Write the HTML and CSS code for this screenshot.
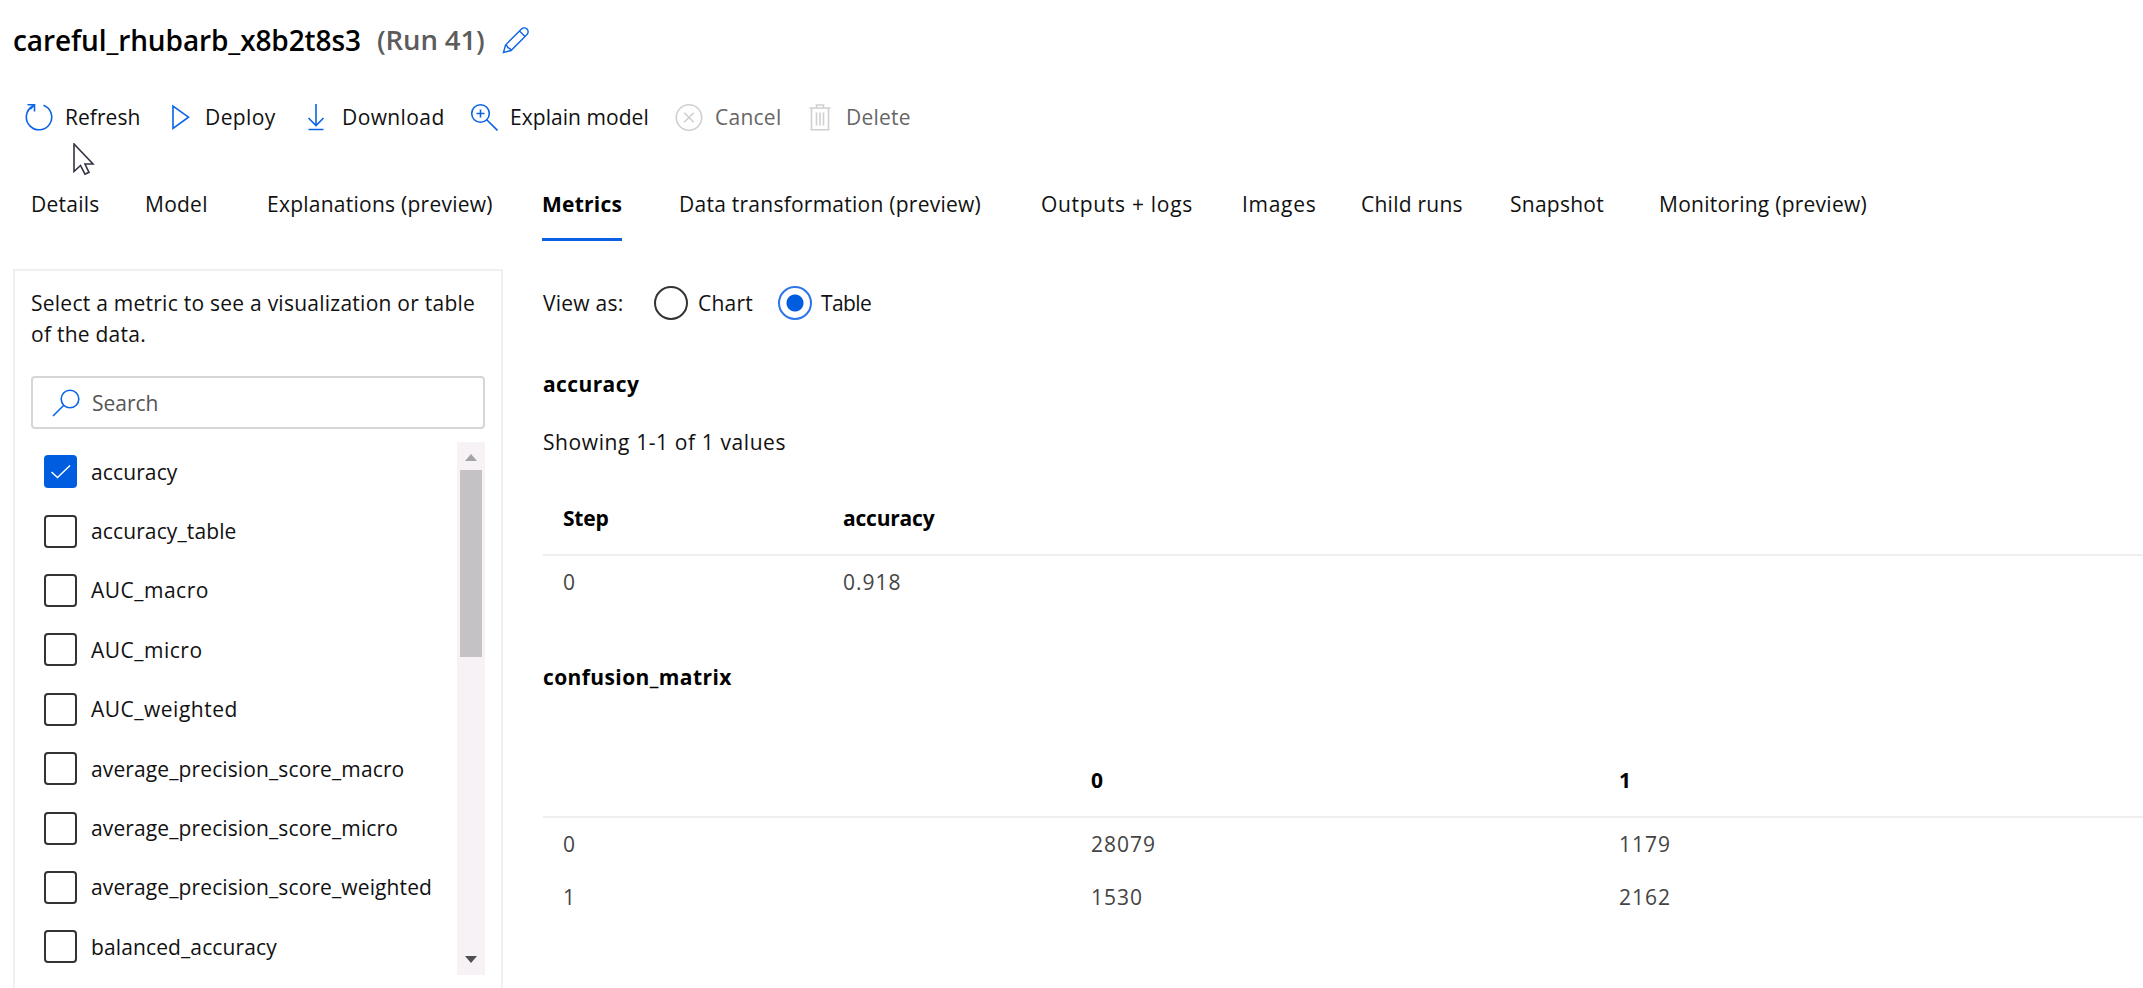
FILE: index.html
```html
<!DOCTYPE html>
<html lang="en">
<head>
<meta charset="utf-8">
<title>careful_rhubarb_x8b2t8s3</title>
<link rel="stylesheet" href="styles.css">
</head>
<body>
<header class="title">
  <h1 class="run-name">careful_rhubarb_x8b2t8s3</h1>
  <span class="run-id">(Run 41)</span>
  <svg class="icon pencil" width="28" height="28" viewBox="0 0 28 28"><path d="M1.500 26.500 3.500 19 19.500 3a3.800 3.800 0 0 1 5.500 5.500L9 24.500ZM17.500 5l5.500 5.500M3.500 19a3.500 3.500 0 0 1 2.500 2.800A3.500 3.500 0 0 1 9 24.500"/></svg>
</header>
<nav class="toolbar">
  <button class="command"><svg class="icon" width="28" height="28" viewBox="0 0 28 28"><path d="M18.500 2.200A12.700 12.700 0 1 1 7.500 3.200M2.500 1.700H9.500V8.500M9.500 1.700 5.500 6"/></svg><span>Refresh</span></button>
  <button class="command"><svg class="icon" width="20" height="28" viewBox="0 0 20 28"><path d="M2 3V25.500L17.500 14.200Z"/></svg><span>Deploy</span></button>
  <button class="command"><svg class="icon" width="18" height="28" viewBox="0 0 18 28"><path d="M9 1V22M1.500 15 9 22.500 16.500 15M1.500 26.500H16.500"/></svg><span>Download</span></button>
  <button class="command"><svg class="icon" width="28" height="28" viewBox="0 0 28 28"><circle cx="10.500" cy="10.500" r="8.800"/><path d="M16.700 16.700 27.500 27.500M10.500 6.500V14.500M6.500 10.500H14.500"/></svg><span>Explain model</span></button>
  <button class="command disabled"><svg class="icon" width="28" height="28" viewBox="0 0 28 28"><circle cx="14" cy="14.500" r="12.700"/><path d="M9.200 9.700 18.800 19.300M18.800 9.700 9.200 19.300"/></svg><span>Cancel</span></button>
  <button class="command disabled"><svg class="icon" width="22" height="28" viewBox="0 0 22 28"><path d="M.5 5H21.500M7.500 5V2H14.500V5M2.500 5V26.800H19.500V5M7.500 9.500V22.500M11 9.500V22.500M14.500 9.500V22.500"/></svg><span>Delete</span></button>
  <svg class="cursor" width="22" height="33" viewBox="0 0 22 33"><path d="M1 1V28.500L7.500 22.500 12 31.200 16 29.300 12 21H20Z"/></svg>
</nav>
<nav class="tabs">
  <a class="tab">Details</a>
  <a class="tab">Model</a>
  <a class="tab">Explanations (preview)</a>
  <a class="tab active">Metrics</a>
  <a class="tab">Data transformation (preview)</a>
  <a class="tab wide">Outputs + logs</a>
  <a class="tab wide">Images</a>
  <a class="tab">Child runs</a>
  <a class="tab">Snapshot</a>
  <a class="tab">Monitoring (preview)</a>
</nav>
<main class="main">
  <aside class="panel">
    <p class="hint">Select a metric to see a visualization or table<br>of the data.</p>
    <div class="search"><svg class="icon" width="28" height="28" viewBox="0 0 28 28"><circle cx="18" cy="10" r="8.800"/><path d="M11.800 16.200 1 27"/></svg><span>Search</span></div>
    <div class="list">
      <ul class="metrics">
        <li class="metric"><span class="box checked"><svg width="22" height="16" viewBox="0 0 22 16"><path d="M1.500 8 7.500 13.500 20 1.500"/></svg></span>accuracy</li>
        <li class="metric"><span class="box"></span>accuracy_table</li>
        <li class="metric auc"><span class="box"></span>AUC_macro</li>
        <li class="metric auc"><span class="box"></span>AUC_micro</li>
        <li class="metric auc"><span class="box"></span>AUC_weighted</li>
        <li class="metric"><span class="box"></span>average_precision_score_macro</li>
        <li class="metric"><span class="box"></span>average_precision_score_micro</li>
        <li class="metric"><span class="box"></span>average_precision_score_weighted</li>
        <li class="metric"><span class="box"></span>balanced_accuracy</li>
      </ul>
      <div class="scrollbar"><i class="arrow up"></i><i class="thumb"></i><i class="arrow down"></i></div>
    </div>
  </aside>
  <section class="content">
    <div class="view-as">
      <span class="view-label">View as:</span>
      <span class="radio"></span><span class="choice">Chart</span>
      <span class="radio selected"></span><span class="choice current">Table</span>
    </div>
    <h2 class="heading accuracy-heading">accuracy</h2>
    <p class="summary">Showing 1-1 of 1 values</p>
    <div class="table steps">
      <div class="row head"><span>Step</span><span>accuracy</span></div>
      <div class="row"><span>0</span><span>0.918</span></div>
    </div>
    <h2 class="heading matrix-heading">confusion_matrix</h2>
    <div class="table matrix">
      <div class="row head"><span></span><span>0</span><span>1</span></div>
      <div class="row"><span>0</span><span>28079</span><span>1179</span></div>
      <div class="row"><span>1</span><span>1530</span><span>2162</span></div>
    </div>
  </section>
</main>
</body>
</html>
```
FILE: styles.css
```css
* { box-sizing: border-box; }
html, body { height: 100%; }
body {
  margin: 0;
  overflow: hidden;
  background: #fff;
  color: #111;
  font: 21px/30px "Open Sans", "Noto Sans", sans-serif;
  white-space: nowrap;
}
h1, h2, p, ul { margin: 0; padding: 0; }
.icon { flex: none; fill: none; stroke: #0b63e5; stroke-width: 1.6; }
.pencil { stroke-width: 1.4; }

.title { display: flex; align-items: center; height: 60px; padding: 20px 0 0 13px; }
.run-name { width: 364px; font-size: 28px; line-height: 40px; font-weight: 600; letter-spacing: -.1px; color: #000; }
.run-id { width: 125px; font-size: 27.5px; line-height: 40px; font-weight: 600; letter-spacing: -.1px; color: #5c5c5c; }

.toolbar {
  position: relative;
  display: grid;
  grid-template-columns: 146px 136px 163px 205px 134px 120px;
  height: 30px;
  margin: 42px 0 0 25px;
}
.command {
  display: flex;
  align-items: center;
  padding: 0;
  border: 0;
  background: none;
  font: inherit;
  letter-spacing: .05px;
  color: #111;
}
.command .icon { margin-right: 12px; }
.command:nth-child(2) .icon { margin-right: 14px; }
.command:nth-child(3) .icon { margin-right: 17px; }
.command:nth-child(6) .icon { margin-right: 15px; }
.command:nth-child(2), .command:nth-child(3) { letter-spacing: .4px; }
.command.disabled { letter-spacing: .25px; color: #666; }
.disabled .icon { stroke: #cfcfcf; }
.cursor { position: absolute; left: 48px; top: 41px; fill: #fff; stroke: #333344; stroke-width: 1.6; }

.tabs {
  display: grid;
  grid-template-columns: 114px 122px 275px 137px 362px 201px 119px 149px 149px 220px;
  height: 52px;
  margin: 57px 0 0 31px;
  letter-spacing: .25px;
}
.tab { justify-self: start; }
.tab.wide { letter-spacing: .7px; }
.tab.active { border-bottom: 3px solid #0b5fe0; font-weight: 700; color: #000; }

.main { display: flex; gap: 40px; height: 760px; margin: 28px 0 0 13px; }
.panel { flex: none; width: 490px; padding: 17px 16px 0; border: 2px solid #f0f0f0; }
.hint { line-height: 31px; letter-spacing: .25px; }
.search {
  display: flex;
  align-items: center;
  gap: 12px;
  height: 53px;
  margin-top: 26px;
  padding-left: 19px;
  border: 2px solid #d6d6d6;
  border-radius: 4px;
  color: #555;
}
.list { display: flex; justify-content: space-between; height: 533px; margin-top: 13px; }
.metrics { padding-left: 13px; list-style: none; }
.metric { display: flex; align-items: center; gap: 14px; height: 59.4px; letter-spacing: .12px; }
.metric.auc { letter-spacing: .5px; }
.box { width: 33px; height: 33px; border: 2px solid #333; border-radius: 4px; }
.box.checked { display: grid; place-items: center; border: 0; background: #005de0; }
.checked path { fill: none; stroke: #fff; stroke-width: 1.5; }
.scrollbar { display: flex; flex-direction: column; align-items: center; width: 28px; padding: 12px 0; background: #f6f2f6; }
.arrow { border: 6px solid transparent; }
.up { border-top: 0; border-bottom: 7px solid #a5a3a6; }
.down { margin-top: auto; border-bottom: 0; border-top: 7px solid #505050; }
.thumb { width: 22px; height: 187px; margin-top: 9px; background: #c4c2c5; }

.content { flex: 1; }
.view-as { display: flex; align-items: center; height: 34px; margin-top: 17px; }
.view-label { width: 111px; letter-spacing: .25px; }
.radio { width: 34px; height: 34px; margin-right: 10px; border: 2px solid #333; border-radius: 50%; }
.choice { width: 80px; letter-spacing: .2px; }
.choice.current { letter-spacing: -.6px; }
.radio.selected { margin-right: 9px; border-color: #2b74ea; background: radial-gradient(circle, #005de0 8px, #fff 9px); }
.heading { font-size: 21px; font-weight: 700; letter-spacing: .4px; color: #000; }
.accuracy-heading { margin-top: 49px; }
.summary { margin-top: 28px; letter-spacing: .6px; }
.table { color: #444; }
.row { display: grid; height: 53px; padding: 11px 0 0 20px; letter-spacing: 1px; }
.row.head { padding-top: 0; border-bottom: 2px solid #f0eff0; font-weight: 700; color: #000; letter-spacing: -.2px; }
.steps { margin-top: 46px; }
.steps .row { grid-template-columns: 280px 1fr; }
.matrix-heading { margin-top: 53px; }
.matrix { margin-top: 73px; }
.matrix .row { grid-template-columns: 528px 528px 1fr; }
```
